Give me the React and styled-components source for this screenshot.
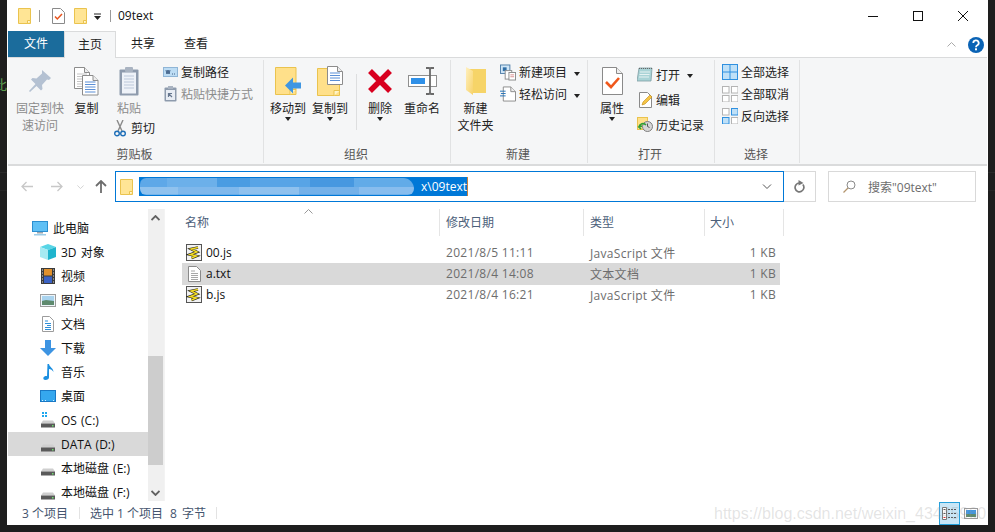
import React from 'react';
import styled, { createGlobalStyle } from 'styled-components';

const Global = createGlobalStyle`
  html, body { margin: 0; padding: 0; background: #1e1e1e; }
  body { font-family: "Open Sans", "Noto Sans CJK SC", sans-serif; font-size: 12px; color: #1a1a1a; }
`;

const Page = styled.div`
  position: relative;
  width: 995px;
  height: 532px;
  display: flex;
  overflow: hidden;
  background:
    linear-gradient(#2a2a2a, #2a2a2a) 0 172px / 100% 1px no-repeat,
    linear-gradient(#262626, #262626) 0 190px / 100% 1px no-repeat,
    #1e1e1e;
`;
const Gutter = styled.div`
  width: 7px;
  height: 525px;
  overflow: hidden;
  padding-top: 76px;
  box-sizing: border-box;
  color: #5c9c4e;
  font-size: 14px;
  line-height: 18px;
  text-indent: -7px;
`;
const Win = styled.div`
  width: 981px;
  height: 525px;
  background: #fff;
  padding: 0 1px;
  box-sizing: border-box;
  display: flex;
  flex-direction: column;
`;

/* title bar */
const TitleBar = styled.div`
  height: 31px;
  display: flex;
  align-items: center;
  padding-left: 10px;
`;
const QuickSep = styled.div`
  width: 1px;
  height: 12px;
  background: #9a9a9a;
  margin: 0 ${p => p.$r}px 0 ${p => p.$l}px;
`;
const QuickItem = styled.div`
  display: flex;
  margin-left: ${p => p.$ml}px;
  padding-top: ${p => p.$pt || 0}px;
`;
const TitleText = styled.span`
  font-size: 12px;
  color: #111;
`;
const Controls = styled.div`
  margin-left: auto;
  display: flex;
  align-items: center;
  margin-right: 19px;
  gap: 35px;
`;

/* tabs */
const TabBar = styled.div`
  height: 26px;
  display: flex;
  align-items: stretch;
`;
const Tab = styled.div`
  width: ${p => p.$w}px;
  box-sizing: border-box;
  text-align: center;
  line-height: 25px;
  color: ${p => (p.$file ? '#fff' : '#222')};
  background: ${p => (p.$file ? '#1b6c9c' : p.$active ? '#f5f6f7' : 'transparent')};
  ${p => p.$active && `
    border: 1px solid #dadbdc;
    border-bottom: 0;
    height: 27px;
    margin-bottom: -1px;
    z-index: 1;
  `}
`;
const TabRight = styled.div`
  margin-left: auto;
  display: flex;
  align-items: center;
  gap: 12px;
  margin-right: 3px;
  margin-top: 1px;
`;

/* ribbon */
const Ribbon = styled.div`
  height: 109px;
  box-sizing: border-box;
  display: flex;
  background: #f5f6f7;
  border-top: 1px solid #dadbdc;
  border-bottom: 2px solid #dadbdc;
  padding-top: 2px;
`;
const Group = styled.div`
  width: ${p => p.$w}px;
  height: 103px;
  box-sizing: border-box;
  border-right: 1px solid #e1e2e3;
  display: flex;
  flex-direction: column;
`;
const GroupBody = styled.div`
  flex: 1;
  display: flex;
  padding: 2px 0 0 ${p => p.$pl}px;
`;
const GroupLabel = styled.div`
  height: 18px;
  line-height: 20px;
  text-align: center;
  padding-right: 2px;
  color: #555;
`;
const Large = styled.div`
  width: ${p => p.$w}px;
  flex: none;
  display: flex;
  flex-direction: column;
  align-items: center;
  text-align: center;
  line-height: 17px;
  color: ${p => (p.$off ? '#8c8c8c' : '#222')};
`;
const LargeIcon = styled.div`
  height: 38px;
  display: flex;
  align-items: center;
  justify-content: center;
`;
const LargeColumn = styled.div`
  width: ${p => p.$w}px;
  flex: none;
  display: flex;
  flex-direction: column;
`;
const Caret = styled.span`
  display: ${p => (p.$inline ? 'inline-block' : 'block')};
  width: 0;
  height: 0;
  border: 3px solid transparent;
  border-top: 4px solid #222;
  border-bottom: 0;
  margin: ${p => (p.$inline ? '0 0 0 7px' : '0')};
  vertical-align: middle;
`;
const VSep = styled.div`
  width: 1px;
  height: 56px;
  margin: 12px ${p => p.$r}px 0 ${p => p.$l}px;
  background: #dddedf;
`;
const Stack = styled.div`
  display: flex;
  flex-direction: column;
  margin: ${p => p.$mt || 0}px 0 0 ${p => p.$ml || 0}px;
`;
const SmallRow = styled.div`
  height: ${p => p.$h || 22}px;
  display: flex;
  align-items: center;
  gap: 3px;
  white-space: nowrap;
  padding-left: ${p => p.$pl || 0}px;
  color: ${p => (p.$off ? '#8c8c8c' : '#222')};
`;
const SmallIcon = styled.div`
  width: 16px;
  height: 16px;
  display: flex;
  align-items: center;
  justify-content: center;
  flex: none;
`;

/* address row */
const AddressRow = styled.div`
  height: 43px;
  box-sizing: border-box;
  display: flex;
  align-items: flex-start;
  padding-top: 5px;
`;
const Nav = styled.div`
  width: 107px;
  height: 31px;
  display: flex;
  align-items: center;
  padding-left: 13px;
  box-sizing: border-box;
`;
const NavSlot = styled.div`
  width: ${p => p.$w}px;
  flex: none;
  display: flex;
  justify-content: center;
`;
const Address = styled.div`
  width: 669px;
  height: 31px;
  box-sizing: border-box;
  border: 1px solid #0078d7;
  display: flex;
  align-items: center;
  padding-left: 4px;
`;
const Selection = styled.div`
  width: 329px;
  height: 19px;
  margin-left: 6px;
  display: flex;
  align-items: center;
  justify-content: space-between;
  background: #0078d7;
  color: #fff;
  border-right: 1px solid #c9803a;
  box-sizing: border-box;
  line-height: 17px;
`;
const Mosaic = styled.div`
  width: 274px;
  height: 17px;
  margin-left: 1px;
  border-radius: 8px 14px 8px 8px;
  background-image:
    linear-gradient(90deg, #5ea8e8 0 10%, #6cb0ea 10% 28%, #4a9ce2 28% 40%, #58a4e6 40% 62%, #4798e0 62% 78%, #62abe8 78% 100%),
    linear-gradient(90deg, #90c2ee 0 14%, #7fb8ec 14% 36%, #8fc1ee 36% 58%, #74b1e9 58% 80%, #88bdee 80% 100%);
  background-size: 100% 54%, 100% 46%;
  background-position: top, bottom;
  background-repeat: no-repeat;
`;
const AddrChevron = styled.div`
  margin-left: auto;
  margin-right: 11px;
  display: flex;
`;
const Refresh = styled.div`
  width: 32px;
  height: 31px;
  box-sizing: border-box;
  border: 1px solid #d9d9d9;
  border-left: 0;
  display: flex;
  align-items: center;
  justify-content: center;
`;
const Search = styled.div`
  width: 148px;
  height: 31px;
  box-sizing: border-box;
  margin-left: 12px;
  border: 1px solid #d9d9d9;
  display: flex;
  align-items: center;
  padding-left: 14px;
  gap: 12px;
  color: #6d6d6d;
`;

/* main area */
const Main = styled.div`
  height: 292px;
  display: flex;
  overflow: hidden;
`;
const Sidebar = styled.div`
  width: 140px;
  flex: none;
  padding-top: 7px;
  box-sizing: border-box;
`;
const NavRow = styled.div`
  height: 24px;
  display: flex;
  align-items: center;
  gap: 5px;
  white-space: nowrap;
  padding-left: ${p => (p.$child ? 32 : 24)}px;
  background: ${p => (p.$on ? '#d9d9d9' : 'transparent')};
  color: #111;
  & > span { word-spacing: 1px; }
`;
const Scroll = styled.div`
  width: 16px;
  flex: none;
  background: #f0f0f0;
  display: flex;
  flex-direction: column;
  margin-right: 2px;
  border-right: 1px solid #f3f3f3;
  box-sizing: content-box;
`;
const ScrollBtn = styled.div`
  height: 17px;
  display: flex;
  align-items: center;
  justify-content: center;
  width: 15px;
`;
const Thumb = styled.div`
  width: 15px;
  height: 109px;
  margin: 130px 0 19px;
  background: #cdcdcd;
`;
const List = styled.div`
  flex: 1;
  padding-left: 12px;
  min-width: 0;
`;
const Header = styled.div`
  display: flex;
  height: 27px;
`;
const HeadCell = styled.div`
  position: relative;
  width: ${p => p.$w}px;
  box-sizing: border-box;
  padding-left: ${p => p.$pl || 6}px;
  line-height: 28px;
  border-right: 1px solid #e5e5e5;
  color: #4c607a;
`;
const SortMark = styled.div`
  position: absolute;
  left: 125px;
  top: 0;
  line-height: 0;
`;
const Rows = styled.div`
  margin: 6px 0 0 3px;
  width: 598px;
`;
const FileRow = styled.div`
  height: 21px;
  display: flex;
  align-items: center;
  background: ${p => (p.$on ? '#d9d9d9' : 'transparent')};
  box-shadow: ${p => (p.$on ? '0 1px 0 #d9d9d9' : 'none')};
  color: #6d6d6d;
  letter-spacing: 0.3px;
`;
const NameCell = styled.div`
  width: 258px;
  box-sizing: border-box;
  padding-left: 4px;
  display: flex;
  align-items: center;
  gap: 4px;
  color: #111;
  letter-spacing: 0;
`;
const Cell = styled.div`
  width: ${p => p.$w}px;
  box-sizing: border-box;
  padding-left: 6px;
`;
const SizeCell = styled.div`
  width: 75px;
  box-sizing: border-box;
  padding-right: 4px;
  text-align: right;
`;

/* status bar */
const Status = styled.div`
  height: 24px;
  display: flex;
  align-items: center;
  padding-left: 14px;
  color: #44546e;
`;
const StatusSep = styled.div`
  width: 1px;
  height: 12px;
  background: #e3e3e3;
  margin: 0 ${p => p.$r}px 0 ${p => p.$l}px;
`;
const StatusGap = styled.span`
  margin-left: 7px;
  word-spacing: 2px;
`;
const Views = styled.div`
  margin-left: auto;
  display: flex;
  align-items: center;
  gap: 4px;
  padding-right: 9px;
`;
const ViewActive = styled.div`
  width: 21px;
  height: 23px;
  box-sizing: border-box;
  border: 1px solid #26a0da;
  background: #c9e6f6;
  display: flex;
  align-items: center;
  justify-content: center;
`;
const Watermark = styled.div`
  position: absolute;
  left: 714px;
  top: 504px;
  font-family: "Liberation Sans", sans-serif;
  font-size: 16px;
  line-height: 20px;
  color: rgba(150, 150, 150, 0.26);
  white-space: nowrap;
  pointer-events: none;
`;

/* icons */
const Folder = ({ w = 13, h = 16 }) => (
  <svg width={w} height={h} viewBox="0 0 13 16">
    <path d="M.5.5h12v15H.5z" fill="#ffe595" stroke="#eac34e" />
    <path d="M9.5 15.5v-3h3" fill="#fff7d8" stroke="#eac34e" />
  </svg>
);
const CheckDoc = ({ w = 13, h = 16 }) => (
  <svg width={w} height={h} viewBox="0 0 13 16">
    <path d="M.5.5h8l4 4v11H.5z" fill="#fff" stroke="#8a8a8a" />
    <path d="M3 8.5l2.3 2.5L10 6" fill="none" stroke="#e8541d" strokeWidth="1.5" />
  </svg>
);
const QuickMenu = () => (
  <svg width="8" height="8" viewBox="0 0 8 8">
    <path d="M0 1h7" stroke="#222" />
    <path d="M0 3h7L3.500 7z" fill="#222" />
  </svg>
);
const Pin = () => (
  <svg width="22" height="23" viewBox="0 0 22 23">
    <path d="M13 0l9 8-2 2-2-.5-5 5.500.5 4-1.500 1.500-4.500-4.500L1 22l-1-1 6.500-7L2 9.500 3.500 8l4 .5L13 3.500z" fill="#b4c1d2" />
  </svg>
);
const Sheet = ({ x, y, w, h, fill = '#fff', lines = '#9fb4d3', stroke = '#8c8c8c' }) => {
  const rows = [];
  for (let ly = y + 7; ly < y + h - 2; ly += 2.5) rows.push(ly);
  return (
    <g>
      <path d={`M${x + .5} ${y + .5}h${w - 6}l5 5v${h - 6}h-${w - 1}z`} fill={fill} stroke={stroke} />
      <path d={`M${x + w - 5.500} ${y + .5}v5h5`} fill="#eee" stroke={stroke} />
      {rows.map(ly => <path key={ly} d={`M${x + 3} ${ly}h${w - 6}`} stroke={lines} />)}
    </g>
  );
};
const Copy = () => (
  <svg width="25" height="29" viewBox="0 0 25 29">
    <Sheet x={0} y={0} w={16} h={22} lines="#c4c4c4" />
    <Sheet x={8} y={8} w={16.500} h={20.500} lines="#5b8fd6" />
  </svg>
);
const Paste = () => (
  <svg width="20" height="30" viewBox="0 0 20 30">
    <rect x=".5" y="3.500" width="19" height="26" rx="1" fill="#8e9bad" />
    <rect x="3" y="6.500" width="14" height="21" fill="#eef2f8" />
    <path d="M5 10h10M5 13h10M5 16h10M5 19h10M5 22h10" stroke="#bcc8da" />
    <rect x="6" y="1" width="8" height="5" rx="1" fill="#a9b3c1" />
  </svg>
);
const PathIcon = () => (
  <svg width="15" height="10" viewBox="0 0 15 10">
    <rect x=".5" y=".5" width="14" height="9" fill="#bcdcf4" stroke="#8fb5d6" />
    <path d="M3 3l1 4 1-4 1 4 1-4M9 7h1M11 7h1" fill="none" stroke="#24456e" strokeWidth=".8" />
  </svg>
);
const ShortcutIcon = () => (
  <svg width="13" height="16" viewBox="0 0 13 16">
    <rect x=".5" y="1.500" width="12" height="14" rx="1" fill="#8e9bad" />
    <rect x="2" y="4" width="9" height="10" fill="#e8edf4" />
    <path d="M4.500 11V7.500h3.500M4.500 7.500L8 11" stroke="#66778f" fill="none" strokeWidth="1.200" />
    <rect x="4" y="0" width="5" height="3" fill="#a9b3c1" />
  </svg>
);
const Scissors = () => (
  <svg width="12" height="17" viewBox="0 0 12 17">
    <path d="M3 0l5 11M9 0L4 11" stroke="#8a8a8a" strokeWidth="1.400" fill="none" />
    <circle cx="3" cy="13.500" r="2.300" fill="none" stroke="#1f6fb8" strokeWidth="1.400" />
    <circle cx="9" cy="13.500" r="2.300" fill="none" stroke="#1f6fb8" strokeWidth="1.400" />
  </svg>
);
const MoveTo = () => (
  <svg width="27" height="28" viewBox="0 0 27 28">
    <path d="M.5.5h20.500v27H.5z" fill="#ffe08a" stroke="#eac34e" />
    <path d="M15 27.500v-5h6" fill="#fff4c8" stroke="#eac34e" />
    <path d="M10 18.500l8-8v5h8v6h-8v5z" fill="#3f96e2" />
  </svg>
);
const CopyTo = () => (
  <svg width="27" height="30" viewBox="0 0 27 30">
    <path d="M.5 2.500h22v27H.5z" fill="#ffe08a" stroke="#eac34e" />
    <path d="M17 29.500v-5h6" fill="#fff4c8" stroke="#eac34e" />
    <Sheet x={10} y={0} w={16} h={19} lines="#5b8fd6" />
  </svg>
);
const DeleteX = () => (
  <svg width="26" height="26" viewBox="0 0 26 26">
    <path d="M3 3l20 20M23 3L3 23" stroke="#d8001f" strokeWidth="5.500" />
  </svg>
);
const Rename = () => (
  <svg width="29" height="28" viewBox="0 0 29 28">
    <rect x=".5" y="8.500" width="28" height="11" fill="#fff" stroke="#8f8f8f" />
    <rect x="3" y="11" width="14" height="6" fill="#2f90e8" />
    <path d="M18 1h3l1 1 1-1h3M22 2v24M18 27h3l1-1 1 1h3" fill="none" stroke="#6a6a6a" strokeWidth="1.800" />
  </svg>
);
const NewFolder = () => (
  <svg width="20" height="28" viewBox="0 0 20 28">
    <defs>
      <linearGradient id="nf" x1="0" x2="1" y1="0" y2="1">
        <stop offset="0" stopColor="#fff0bf" />
        <stop offset="1" stopColor="#f7d269" />
      </linearGradient>
    </defs>
    <path d="M0 2h20v24H6z" fill="#f6d468" />
    <path d="M0 0l7 4v24L0 23z" fill="url(#nf)" />
  </svg>
);
const NewItem = () => (
  <svg width="17" height="17" viewBox="0 0 17 17">
    <rect x=".5" y=".5" width="10" height="9" fill="#cfe6f7" stroke="#4f7ea8" />
    <rect x="3" y="3" width="4" height="4" fill="#2f6ea6" />
    <rect x="5.500" y="6.500" width="7" height="9" fill="#fff" stroke="#8a8a8a" />
    <rect x="9.500" y="8.500" width="7" height="8" fill="#fff" stroke="#8a8a8a" />
    <path d="M11 11h4M11 13h4" stroke="#d98c8c" />
  </svg>
);
const EasyAccess = () => (
  <svg width="17" height="16" viewBox="0 0 17 16">
    <path d="M3.500.5h8l5 5v10h-13z" fill="#fff" stroke="#8a8a8a" />
    <path d="M11.500.5v5h5" fill="#eee" stroke="#8a8a8a" />
    <path d="M0 5h6M1 7.500h5M0 10h6" stroke="#1f6fb8" />
  </svg>
);
const Props = () => (
  <svg width="21" height="28" viewBox="0 0 21 28">
    <path d="M.5.5h14l6 6v21H.5z" fill="#fff" stroke="#8a8a8a" />
    <path d="M14.500.5v6h6" fill="#eee" stroke="#8a8a8a" />
    <path d="M4 15l5 5 8-9" fill="none" stroke="#f0581c" strokeWidth="2.600" />
  </svg>
);
const Notepad = () => (
  <svg width="16" height="15" viewBox="0 0 16 15">
    <path d="M2 1h13l-1 13H0z" fill="#a9d3d6" stroke="#7d9ea3" strokeWidth=".8" />
    <path d="M2 1.500h13" stroke="#666" strokeDasharray="1 1" />
    <path d="M3 5h10M2.500 7.500h10M2 10h10" stroke="#e6f2f2" />
  </svg>
);
const Edit = () => (
  <svg width="13" height="16" viewBox="0 0 13 16">
    <path d="M.5.5h8l4 4v11H.5z" fill="#fff" stroke="#8a8a8a" />
    <path d="M3 13l1-3 7-7 2 2-7 7z" fill="#f6c544" stroke="#c08a1a" strokeWidth=".6" />
  </svg>
);
const History = () => (
  <svg width="16" height="15" viewBox="0 0 16 15">
    <rect x=".5" y=".5" width="10" height="12" fill="#ffe08a" stroke="#eac34e" />
    <circle cx="10.500" cy="9.500" r="5" fill="#d6d6d6" stroke="#7d7d7d" />
    <path d="M10.500 6.500v3l2 1" stroke="#555" fill="none" />
    <path d="M2 10a4 4 0 0 1 7-2M4 12l-2-2 3-1" stroke="#2f9e35" strokeWidth="1.700" fill="none" />
  </svg>
);
const Grid = ({ on = [] }) => (
  <svg width="16" height="16" viewBox="0 0 16 16">
    {[[0, 0], [9, 0], [0, 9], [9, 9]].map(([x, y], i) => (
      <rect key={i} x={x + .5} y={y + .5} width="6.500" height="6.500"
        fill={on.includes(i) ? '#bfe0f7' : '#fff'} stroke={on.includes(i) ? '#2f90e0' : '#b4b4b4'} />
    ))}
  </svg>
);
const SelectAll = () => (
  <svg width="16" height="16" viewBox="0 0 16 16">
    <rect x=".5" y=".5" width="15" height="15" fill="#bfe0f7" stroke="#2f90e0" />
    <path d="M8 0v16M0 8h16" stroke="#2f90e0" />
  </svg>
);
const Arrow = ({ flip, color = '#c8c8c8' }) => (
  <svg width="12" height="11" viewBox="0 0 12 11">
    <path d={flip ? 'M6.500 1L11 5.500 6.500 10M11 5.500H0' : 'M5.500 1L1 5.500 5.500 10M1 5.500h11'} fill="none" stroke={color} strokeWidth="1.300" />
  </svg>
);
const Up = () => (
  <svg width="12" height="13" viewBox="0 0 12 13">
    <path d="M1 6l5-5 5 5M6 1v12" fill="none" stroke="#6d6d6d" strokeWidth="1.800" />
  </svg>
);
const Chev = ({ w = 9, h = 5, color = '#555', sw = 1, down }) => (
  <svg width={w} height={h} viewBox="0 0 9 5">
    <path d={down ? 'M.5.5l4 4 4-4' : 'M.5 4.500l4-4 4 4'} fill="none" stroke={color} strokeWidth={sw} />
  </svg>
);
const RefreshIcon = () => (
  <svg width="11" height="13" viewBox="0 0 11 13">
    <path d="M8.800 4.500A4.400 4.400 0 1 1 5.500 3" fill="none" stroke="#777" strokeWidth="1.700" />
    <path d="M4.500 0l5 3-5 2.500z" fill="#777" />
  </svg>
);
const SearchIcon = () => (
  <svg width="13" height="13" viewBox="0 0 13 13">
    <circle cx="8" cy="5" r="4" fill="none" stroke="#8a8a8a" />
    <path d="M5 8l-4.500 4.500" stroke="#b4956e" strokeWidth="1.200" />
  </svg>
);
const Help = () => (
  <svg width="16" height="16" viewBox="0 0 16 16">
    <circle cx="8" cy="8" r="8" fill="#0a63b5" />
    <path d="M5.300 6a2.700 2.600 0 1 1 4 2.300C8.300 8.900 8 9.300 8 10.300" fill="none" stroke="#fff" strokeWidth="1.800" />
    <rect x="7" y="11.300" width="2" height="2" fill="#fff" />
  </svg>
);
const PC = () => (
  <svg width="16" height="15" viewBox="0 0 16 15">
    <rect x=".5" y=".5" width="15" height="10" fill="#5fc0f5" stroke="#2c8fd0" />
    <rect x="5" y="11" width="6" height="1.500" fill="#9aa5ae" />
    <rect x="2" y="13" width="12" height="1.500" fill="#9ecde8" />
  </svg>
);
const Cube = () => (
  <svg width="16" height="16" viewBox="0 0 16 16">
    <path d="M8 0l8 3-8 3-8-3z" fill="#58d5e6" />
    <path d="M0 3l8 3v10l-8-3z" fill="#a6eaf2" />
    <path d="M16 3L8 6v10l8-3z" fill="#1fb4cd" />
  </svg>
);
const Film = () => (
  <svg width="14" height="16" viewBox="0 0 14 16">
    <rect width="14" height="16" fill="#3b3b3b" />
    <rect x="3" y="1" width="8" height="6.500" fill="#e0902c" />
    <rect x="3" y="8.500" width="8" height="6.500" fill="#3b62c4" />
    <path d="M1 2h1M1 5h1M1 8h1M1 11h1M1 14h1M12 2h1M12 5h1M12 8h1M12 11h1M12 14h1" stroke="#ddd" />
  </svg>
);
const Picture = () => (
  <svg width="16" height="13" viewBox="0 0 16 13">
    <rect x=".5" y=".5" width="15" height="12" fill="#eef5fa" stroke="#9c9c9c" />
    <rect x="2" y="2" width="12" height="5" fill="#a9d3ee" />
    <path d="M2 7l4-1 8 1v4H2z" fill="#5e8a6e" />
  </svg>
);
const DocIcon = () => (
  <svg width="12" height="16" viewBox="0 0 12 16">
    <path d="M.5.5h7l4 4v11H.5z" fill="#fff" stroke="#9c9c9c" />
    <path d="M3 5h3M3 7.500h6M5 9.500h4M3 11.500h6M3 13.500h6" stroke="#2f8fd8" />
  </svg>
);
const Download = () => (
  <svg width="16" height="16" viewBox="0 0 16 16">
    <path d="M5 0h6v8h5l-8 8-8-8h5z" fill="#3d94e2" />
  </svg>
);
const Music = () => (
  <svg width="11" height="16" viewBox="0 0 11 16">
    <path d="M4.500 0h1.500c.3 3 4.500 4 4.500 8-1-2-3-3-4.500-3v8.500c0 1.500-1.500 2.500-3.500 2.500-2 0-2.500-1.500-2-2.500.6-1.200 2.500-1.800 3.500-1.300z" fill="#1c8fe0" />
  </svg>
);
const Desktop = () => (
  <svg width="16" height="12" viewBox="0 0 16 12">
    <rect x=".5" y=".5" width="15" height="11" fill="#35a7ee" stroke="#1a78c4" />
    <path d="M2 10.500h1M5 10.500h1M13 10.500h1" stroke="#d8efff" />
  </svg>
);
const Drive = ({ win }) => (
  <svg width="16" height="16" viewBox="0 0 16 16">
    {win && <path d="M2 0h2v2H2zM5 0h2v2H5zM2 3h2v2H2zM5 3h2v2H5z" fill="#1ea7ee" />}
    <path d="M3 8.500h10l2 3H1z" fill="#cfcfcf" />
    <rect x="1" y="11.500" width="14" height="4" fill="#5a5a5a" />
    <rect x="12" y="13" width="1.500" height="1.500" fill="#6fdc6f" />
  </svg>
);
const JsFile = () => (
  <svg width="16" height="17" viewBox="0 0 16 17">
    <rect x=".5" y=".5" width="15" height="16" fill="#f2f2f2" stroke="#555" />
    <path d="M12 3.500L5 5l6 3-7 2.500 6.500 1.500-5 2" fill="none" stroke="#222" strokeWidth="2.600" />
    <path d="M12 3.500L5 5l6 3-7 2.500 6.500 1.500-5 2" fill="none" stroke="#f4dc25" strokeWidth="1.400" />
  </svg>
);
const TxtFile = () => (
  <svg width="13" height="16" viewBox="0 0 13 16">
    <path d="M.5.5h8l4 4v11H.5z" fill="#fff" stroke="#8a8a8a" />
    <path d="M3 5h4M3 7.500h7M3 9.500h7M3 11.500h7M3 13.500h7" stroke="#a8a8a8" />
  </svg>
);
const DetailsIcon = () => (
  <svg width="15" height="13" viewBox="0 0 15 13">
    <path d="M.5.5h4v12h-4z" fill="#fff" stroke="#777" />
    <path d="M1.500 2.500h2M1.500 6.500h2" stroke="#555" />
    <path d="M1.500 10.500h2" stroke="#d33" />
    <path d="M6 2.500h9M6 6.500h9M6 10.500h9" stroke="#555" strokeDasharray="2 1" />
  </svg>
);
const LargeView = () => (
  <svg width="14" height="11" viewBox="0 0 14 11">
    <rect x=".5" y=".5" width="13" height="10" fill="#fff" stroke="#9c9c9c" />
    <rect x="2" y="2" width="10" height="4" fill="#3f96e2" />
    <rect x="2" y="6" width="10" height="3" fill="#5e8a6e" />
  </svg>
);

const navItems = [
  { name: '此电脑', Icon: PC },
  { name: '3D 对象', Icon: Cube, child: true },
  { name: '视频', Icon: Film, child: true },
  { name: '图片', Icon: Picture, child: true },
  { name: '文档', Icon: DocIcon, child: true },
  { name: '下载', Icon: Download, child: true },
  { name: '音乐', Icon: Music, child: true },
  { name: '桌面', Icon: Desktop, child: true },
  { name: 'OS (C:)', Icon: () => <Drive win />, child: true },
  { name: 'DATA (D:)', Icon: Drive, child: true, on: true },
  { name: '本地磁盘 (E:)', Icon: Drive, child: true },
  { name: '本地磁盘 (F:)', Icon: Drive, child: true },
];

const files = [
  { name: '00.js', date: '2021/8/5 11:11', type: 'JavaScript 文件', Icon: JsFile },
  { name: 'a.txt', date: '2021/8/4 14:08', type: '文本文档', Icon: TxtFile, on: true },
  { name: 'b.js', date: '2021/8/4 16:21', type: 'JavaScript 文件', Icon: JsFile },
];

const Big = ({ w, icon, off, caret, children }) => (
  <Large $w={w} $off={off}>
    <LargeIcon>{icon}</LargeIcon>
    {children}
    {caret && <Caret />}
  </Large>
);

const Small = ({ icon, off, caret, h, pl, children }) => (
  <SmallRow $off={off} $h={h} $pl={pl}>
    <SmallIcon>{icon}</SmallIcon>
    <span>{children}{caret && <Caret $inline />}</span>
  </SmallRow>
);

export default function App() {
  return (
    <Page>
      <Global />
      <Gutter>此</Gutter>
      <Win>
        <TitleBar>
          <Folder />
          <QuickSep $l={8} $r={12} />
          <CheckDoc />
          <QuickItem $ml={9}><Folder /></QuickItem>
          <QuickItem $ml={7} $pt={2}><QuickMenu /></QuickItem>
          <QuickSep $l={8} $r={7} />
          <TitleText>09text</TitleText>
          <Controls>
            <svg width="10" height="10" viewBox="0 0 10 10"><path d="M0 5.500h10" stroke="#111" /></svg>
            <svg width="10" height="10" viewBox="0 0 10 10"><rect x=".5" y=".5" width="9" height="9" fill="none" stroke="#111" /></svg>
            <svg width="10" height="10" viewBox="0 0 10 10"><path d="M0 0l10 10M10 0L0 10" stroke="#111" /></svg>
          </Controls>
        </TitleBar>

        <TabBar>
          <Tab $w={56} $file>文件</Tab>
          <Tab $w={52} $active>主页</Tab>
          <Tab $w={54}>共享</Tab>
          <Tab $w={52}>查看</Tab>
          <TabRight>
            <Chev color="#aaa" />
            <Help />
          </TabRight>
        </TabBar>

        <Ribbon>
          <Group $w={256}>
            <GroupBody $pl={4}>
              <Big w={56} icon={<Pin />} off>固定到快<br />速访问</Big>
              <Big w={37} icon={<Copy />}>复制</Big>
              <LargeColumn $w={48}>
                <Big w={48} icon={<Paste />} off>粘贴</Big>
                <Small icon={<Scissors />} pl={7}>剪切</Small>
              </LargeColumn>
              <Stack $ml={9} $mt={-1}>
                <Small icon={<PathIcon />}>复制路径</Small>
                <Small icon={<ShortcutIcon />} off>粘贴快捷方式</Small>
              </Stack>
            </GroupBody>
            <GroupLabel>剪贴板</GroupLabel>
          </Group>

          <Group $w={187}>
            <GroupBody $pl={3}>
              <Big w={42} icon={<MoveTo />} caret>移动到</Big>
              <Big w={42} icon={<CopyTo />} caret>复制到</Big>
              <VSep $l={5} $r={2} />
              <Big w={42} icon={<DeleteX />} caret>删除</Big>
              <Big w={42} icon={<Rename />}>重命名</Big>
            </GroupBody>
            <GroupLabel>组织</GroupLabel>
          </Group>

          <Group $w={137}>
            <GroupBody $pl={2}>
              <Big w={45} icon={<NewFolder />}>新建<br />文件夹</Big>
              <Stack $ml={2} $mt={-1}>
                <Small icon={<NewItem />} caret>新建项目</Small>
                <Small icon={<EasyAccess />} caret>轻松访问</Small>
              </Stack>
            </GroupBody>
            <GroupLabel>新建</GroupLabel>
          </Group>

          <Group $w={127}>
            <GroupBody $pl={4}>
              <Big w={40} icon={<Props />} caret>属性</Big>
              <Stack $ml={5}>
                <Small icon={<Notepad />} caret h={25}>打开</Small>
                <Small icon={<Edit />} h={25}>编辑</Small>
                <Small icon={<History />} h={25}>历史记录</Small>
              </Stack>
            </GroupBody>
            <GroupLabel>打开</GroupLabel>
          </Group>

          <Group $w={85}>
            <GroupBody $pl={7}>
              <Stack $mt={-1}>
                <Small icon={<SelectAll />}>全部选择</Small>
                <Small icon={<Grid />}>全部取消</Small>
                <Small icon={<Grid on={[1, 2]} />}>反向选择</Small>
              </Stack>
            </GroupBody>
            <GroupLabel>选择</GroupLabel>
          </Group>
        </Ribbon>

        <AddressRow>
          <Nav>
            <NavSlot $w={12}><Arrow /></NavSlot>
            <NavSlot $w={18} />
            <NavSlot $w={12}><Arrow flip /></NavSlot>
            <NavSlot $w={12} />
            <NavSlot $w={10}><Chev w={7} h={4} color="#c8c8c8" down /></NavSlot>
            <NavSlot $w={32}><Up /></NavSlot>
          </Nav>
          <Address>
            <Folder />
            <Selection>
              <Mosaic />
              <span>x\09text</span>
            </Selection>
            <AddrChevron><Chev w={10} h={5} color="#555" down /></AddrChevron>
          </Address>
          <Refresh><RefreshIcon /></Refresh>
          <Search>
            <SearchIcon />
            <span>搜索"09text"</span>
          </Search>
        </AddressRow>

        <Main>
          <Sidebar>
            {navItems.map(({ name, Icon, child, on }) => (
              <NavRow key={name} $child={child} $on={on}>
                <SmallIcon><Icon /></SmallIcon>
                <span>{name}</span>
              </NavRow>
            ))}
          </Sidebar>
          <Scroll>
            <ScrollBtn><Chev w={9} h={6} color="#606060" sw={1.800} /></ScrollBtn>
            <Thumb />
            <ScrollBtn><Chev w={9} h={6} color="#606060" sw={1.800} down /></ScrollBtn>
          </Scroll>
          <List>
            <Header>
              <HeadCell $w={261}>
                名称
                <SortMark><Chev color="#999" /></SortMark>
              </HeadCell>
              <HeadCell $w={144}>修改日期</HeadCell>
              <HeadCell $w={121}>类型</HeadCell>
              <HeadCell $w={79} $pl={5}>大小</HeadCell>
            </Header>
            <Rows>
              {files.map(({ name, date, type, Icon, on }) => (
                <FileRow key={name} $on={on}>
                  <NameCell>
                    <SmallIcon><Icon /></SmallIcon>
                    <span>{name}</span>
                  </NameCell>
                  <Cell $w={144}>{date}</Cell>
                  <Cell $w={121}>{type}</Cell>
                  <SizeCell>1 KB</SizeCell>
                </FileRow>
              ))}
            </Rows>
          </List>
        </Main>

        <Status>
          <span>3 个项目</span>
          <StatusSep $l={11} $r={10} />
          <span>选中 1 个项目</span>
          <StatusGap>8 字节</StatusGap>
          <StatusSep $l={10} $r={0} />
          <Views>
            <ViewActive><DetailsIcon /></ViewActive>
            <LargeView />
          </Views>
        </Status>
      </Win>
      <Watermark>https://blog.csdn.net/weixin_43445960</Watermark>
    </Page>
  );
}
